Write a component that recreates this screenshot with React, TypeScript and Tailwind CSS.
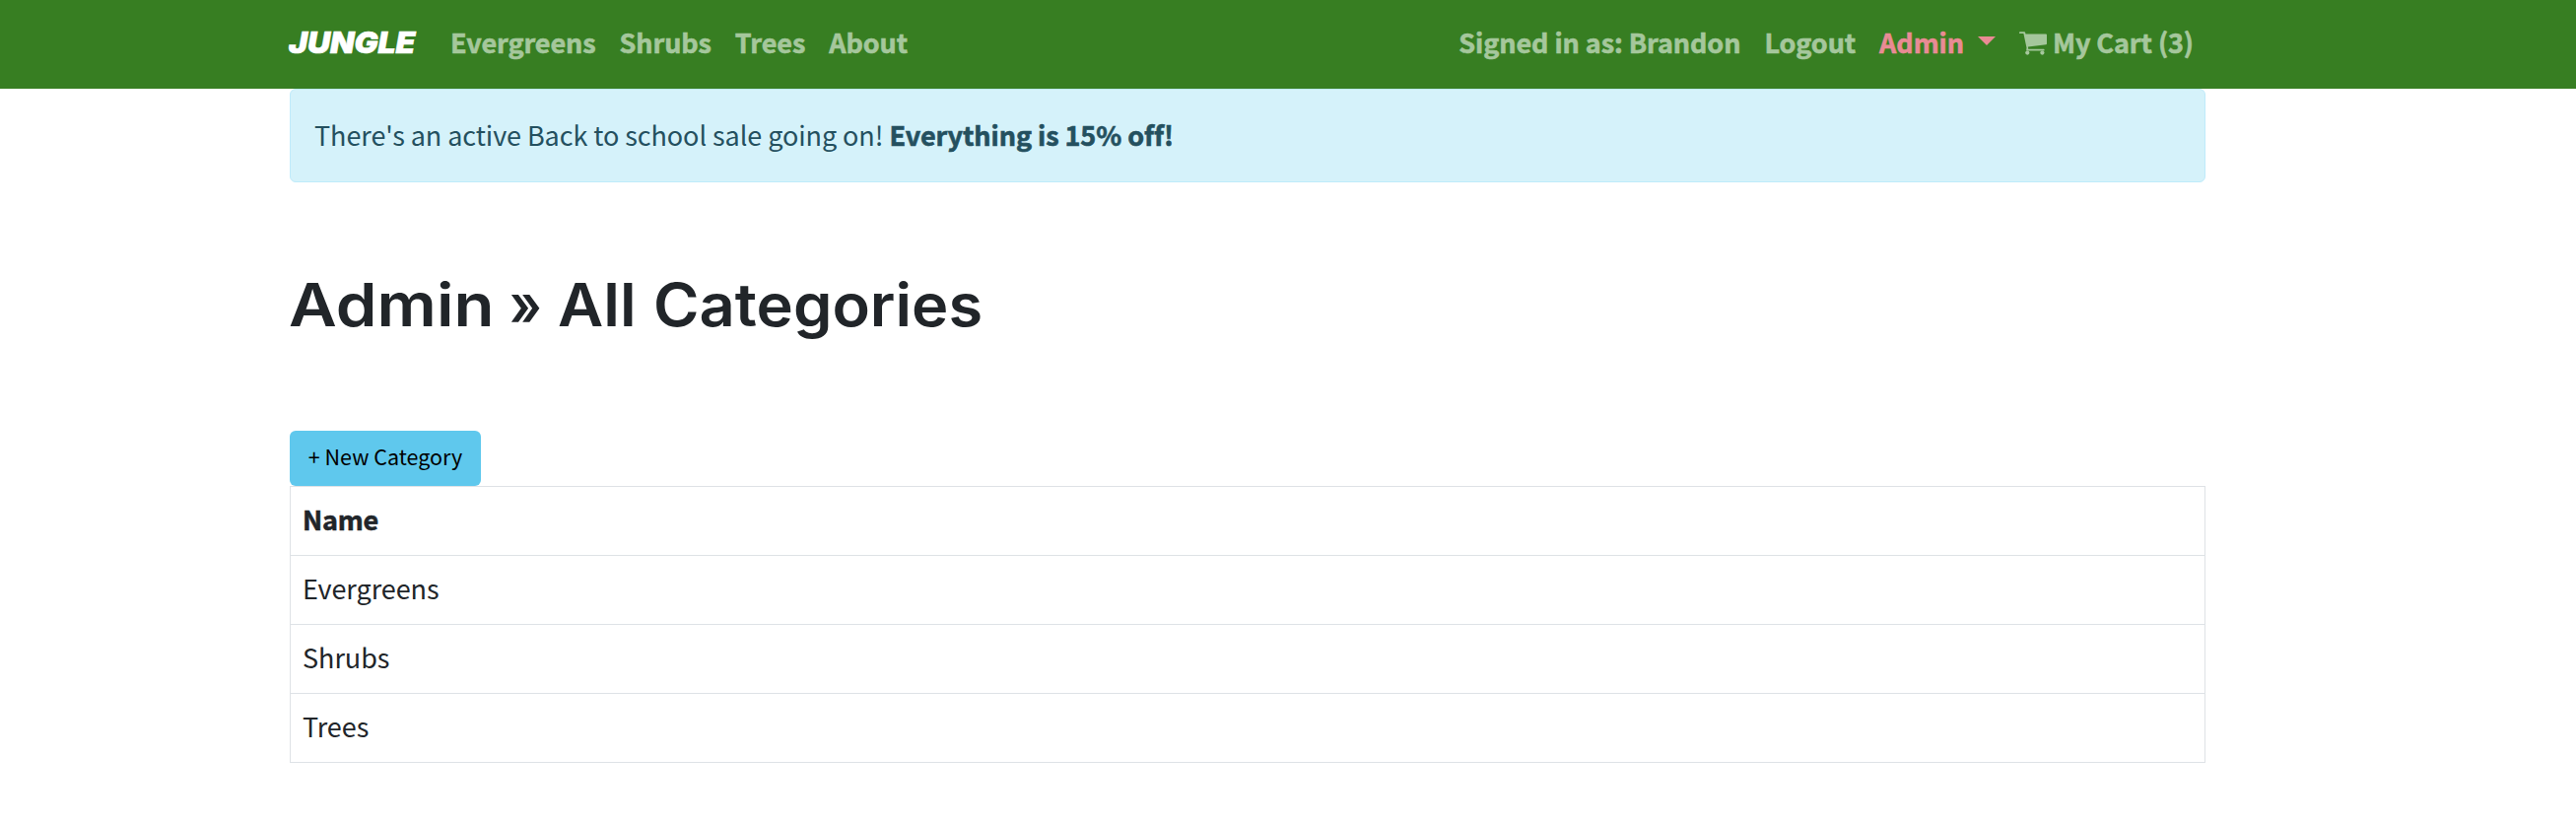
const links = ["Evergreens", "Shrubs", "Trees", "About"];
const categories = ["Evergreens", "Shrubs", "Trees"];

function CartIcon() {
  return (
    <svg className="mt-[13px] mr-[6px] h-[24px] w-[28px] shrink-0" viewBox="0 0 28 24" fill="currentColor">
      <path d="M.8 .3H5.2Q6 .3 6.2 1.2L6.5 2.4H27Q28 2.4 28 3.4V12.2Q28 13 27.2 13.2L9 15.4L9.2 17.8H24.8Q25.6 17.8 25.6 18.7Q25.6 19.6 24.8 19.6H8Q7 19.6 7.2 18.4L7.5 16.6L4.4 2.1H.8Q0 2.1 0 1.2Q0 .3 .8 .3Z" />
      <circle cx="8.3" cy="21.6" r="2.1" />
      <circle cx="23.4" cy="21.6" r="2.1" />
    </svg>
  );
}

function Navbar() {
  return (
    <nav className="flex h-[90px] items-center bg-[#377e22] pr-[376px] pb-[4px] pl-[293px] text-[27px] leading-[48px] font-bold tracking-[-0.08px] whitespace-nowrap text-[#a5c79c] [-webkit-text-stroke:0.6px_currentColor]">
      <a className="w-[152px] shrink-0 pb-[1px]">
        <span className="inline-block origin-left scale-x-[1.065] font-['Inter',sans-serif] text-[30px] font-black italic text-white">JUNGLE</span>
      </a>
      <div className="flex grow">
        {links.map((l) => (
          <a key={l} className="px-[12px]">{l}</a>
        ))}
      </div>
      <div className="flex">
        <span className="px-[12px]">Signed in as: Brandon</span>
        <a className="px-[12px]">Logout</a>
        <a className="flex px-[12px] text-[#e98b94]">
          Admin
          <svg className="mt-[18px] ml-[14px] h-[9px] w-[18px]" viewBox="0 0 18 9"><path d="M0 0H18L9 9Z" fill="currentColor" /></svg>
        </a>
        <a className="flex px-[12px]">
          <CartIcon />
          My Cart (3)
        </a>
      </div>
    </nav>
  );
}

export default function App() {
  return (
    <div className="min-h-[836px] bg-white font-['Noto_Sans_CJK_SC',sans-serif] text-[27px] text-[#212529]">
      <Navbar />
      <main className="mr-[376px] ml-[294px]">
        <div className="h-[95px] rounded-[6px] border border-[#bfebfa] bg-[#d5f2fa] px-[24px] pt-[22px] leading-[48px] tracking-[-0.07px] text-[#24505f]">
          There's an active Back to school sale going on!{" "}
          <strong className="font-bold [-webkit-text-stroke:0.6px_currentColor]">Everything is 15% off!</strong>
        </div>
        <h1 className="mt-[84px] flex h-[80px] font-['Inter',sans-serif] text-[60px] leading-[80px] font-semibold whitespace-nowrap">
          <span className="-ml-px w-[224px] origin-left scale-x-[1.117]">Admin</span>
          <span className="w-[49px] origin-left scale-x-[0.86]">»</span>
          <span className="w-[97px] origin-left scale-x-[1.06]">All</span>
          <span className="origin-left scale-x-[1.053]">Categories</span>
        </h1>
        <a className="mt-[88px] flex h-[56px] w-[194px] items-center justify-center rounded-[6px] bg-[#5fc8ed] pb-[4px] text-[21.5px] text-black">
          + New Category
        </a>
        <table className="w-full border-collapse text-left leading-[48px]">
          <thead>
            <tr><th className="h-[70px] border border-[#dee2e6] px-[12px] pt-0 pb-[3px] font-bold tracking-[-0.2px] [-webkit-text-stroke:0.6px_currentColor]">Name</th></tr>
          </thead>
          <tbody>
            {categories.map((c) => (
              <tr key={c}><td className="h-[70px] border border-[#dee2e6] px-[12px] pt-0 pb-[3px] tracking-[-0.05px]">{c}</td></tr>
            ))}
          </tbody>
        </table>
      </main>
    </div>
  );
}
